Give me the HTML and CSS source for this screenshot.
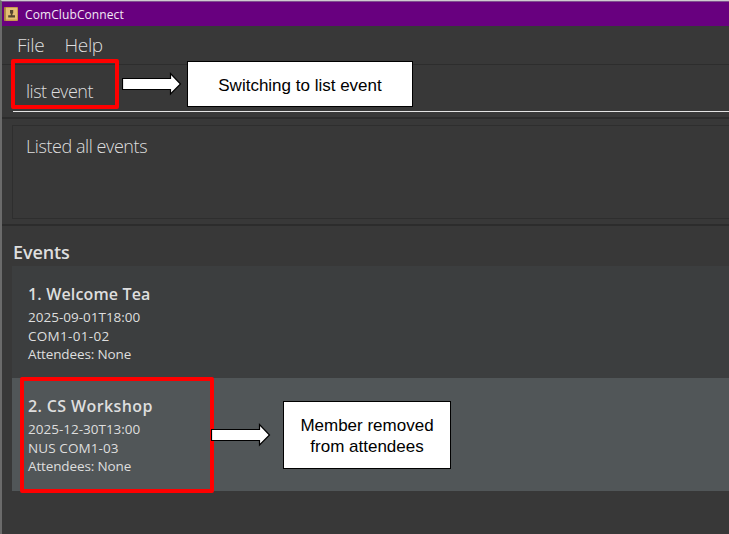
FILE: index.html
```html
<!DOCTYPE html>
<html lang="en">
<head>
<meta charset="utf-8">
<title>ComClubConnect</title>
<link rel="stylesheet" href="styles.css">
</head>
<body>
<div class="window">
  <header class="titlebar">
    <svg class="app-icon" width="14" height="14" viewBox="0 0 14 14">
      <rect width="14" height="14" rx="1" fill="#c79a4c"/>
      <rect x="1.5" y="1" width="11.5" height="11.5" fill="#e3bd74"/>
      <path d="M1 0v14" stroke="#8f6a35"/>
      <path d="M6 3h3.200v3L8.400 7v1.200H11V10.500H4.200V8.200H6.800V7L6 6z" fill="#54462f"/>
    </svg>
    <span class="app-name">ComClubConnect</span>
  </header>
  <nav class="menubar"><span class="file">File</span><span class="help">Help</span></nav>
  <section class="command"><div class="field"><span>list event</span></div></section>
  <section class="result"><div class="result-box"><span>Listed all events</span></div></section>
  <main class="events">
    <h1><span>Events</span></h1>
    <ul>
      <li class="card">
        <h2 class="tea">1. Welcome Tea</h2>
        <p class="date">2025-09-01T18:00</p>
        <p class="place">COM1-01-02</p>
        <p class="people">Attendees: None</p>
      </li>
      <li class="card selected">
        <h2 class="workshop">2. CS Workshop</h2>
        <p class="date">2025-12-30T13:00</p>
        <p class="venue">NUS COM1-03</p>
        <p class="people">Attendees: None</p>
      </li>
    </ul>
  </main>
</div>
<div class="mark mark-command"></div>
<div class="mark mark-event"></div>
<svg class="arrow arrow-command" width="60" height="24" viewBox="0 0 60 24"><path d="M.5 6.500H48.500V1.500L58.500 12L48.500 22V17.500H.5z"/></svg>
<svg class="arrow arrow-event" width="60" height="24" viewBox="0 0 60 24"><path d="M.5 6.500H48.500V1.500L58.500 12L48.500 22V17.500H.5z"/></svg>
<div class="callout callout-command">Switching to list event</div>
<div class="callout callout-event">Member removed<br>from attendees</div>
</body>
</html>
```
FILE: styles.css
```css
* { box-sizing: border-box; }
body { margin: 0; width: 729px; height: 534px; overflow: hidden; position: relative; background: #383838; color: #dedede; font-family: "Open Sans", "Noto Sans", sans-serif; }
h1, h2, p, ul { margin: 0; padding: 0; list-style: none; }
.window { height: 534px; border-top: 1px solid #cfcbd0; border-left: 2px solid #6b6b6b; }
.titlebar { height: 25px; display: flex; align-items: center; gap: 7px; padding-left: 2px; background: #68007f; border-top: 1px solid #805090; color: #f2e8f4; font-size: 12px; }
.app-name { letter-spacing: .1px; }
.menubar { height: 39px; display: flex; gap: 20px; padding-left: 15px; border-bottom: 1px solid #2d2d2d; font-size: 19px; font-weight: 300; line-height: 38px; letter-spacing: -.3px; }
.command { height: 54px; padding-left: 11px; border-bottom: 2px solid #2c2c2c; }
.field { height: 47px; padding: 13px 0 0 13px; border-bottom: 1px solid #e4e4e4; font-size: 18px; font-weight: 300; line-height: 26px; letter-spacing: -.5px; }
.result { height: 107px; padding: 6px 0 0 10px; border-bottom: 2px solid #2c2c2c; }
.result-box { height: 94px; padding: 7px 0 0 13px; border: 1px solid #2e2e2e; border-right: 0; font-size: 18px; font-weight: 300; line-height: 26px; letter-spacing: -.43px; }
.events { padding-left: 10px; }
h1 { height: 40px; padding-top: 13px; padding-left: 1px; font-size: 18px; line-height: 26px; font-weight: 600; letter-spacing: -.1px; }
.card { height: 112px; padding: 16px 0 0 16px; background: #3c3e3f; }
.selected { height: 113px; background: #515658; }
h2 { height: 25px; font-size: 16px; line-height: 24px; font-weight: 600; }
.tea { letter-spacing: .15px; }
.workshop { letter-spacing: .38px; }
.card p { font-size: 13.5px; height: 18.5px; line-height: 20px; }
.card .place { letter-spacing: .3px; }
.card .venue { letter-spacing: .1px; }
.card .people { letter-spacing: -.13px; }
.mark { position: absolute; border: 4px solid #f00; border-radius: 2px; }
.mark-command { left: 11px; top: 59px; width: 108px; height: 50px; }
.mark-event { left: 20px; top: 377px; width: 194px; height: 116px; }
.arrow { position: absolute; fill: #fff; stroke: #000; stroke-width: 1.200; }
.arrow-command { left: 122px; top: 72px; }
.arrow-event { left: 211px; top: 423px; }
.callout { position: absolute; display: flex; align-items: center; justify-content: center; text-align: center; background: #fff; border: 1px solid #000; color: #000; font: 17px/21px "Liberation Sans", sans-serif; }
.callout-command { left: 187px; top: 61px; width: 226px; height: 46px; padding-top: 3px; }
.callout-event { left: 283px; top: 401px; width: 168px; height: 68px; padding-top: 2px; }
```
